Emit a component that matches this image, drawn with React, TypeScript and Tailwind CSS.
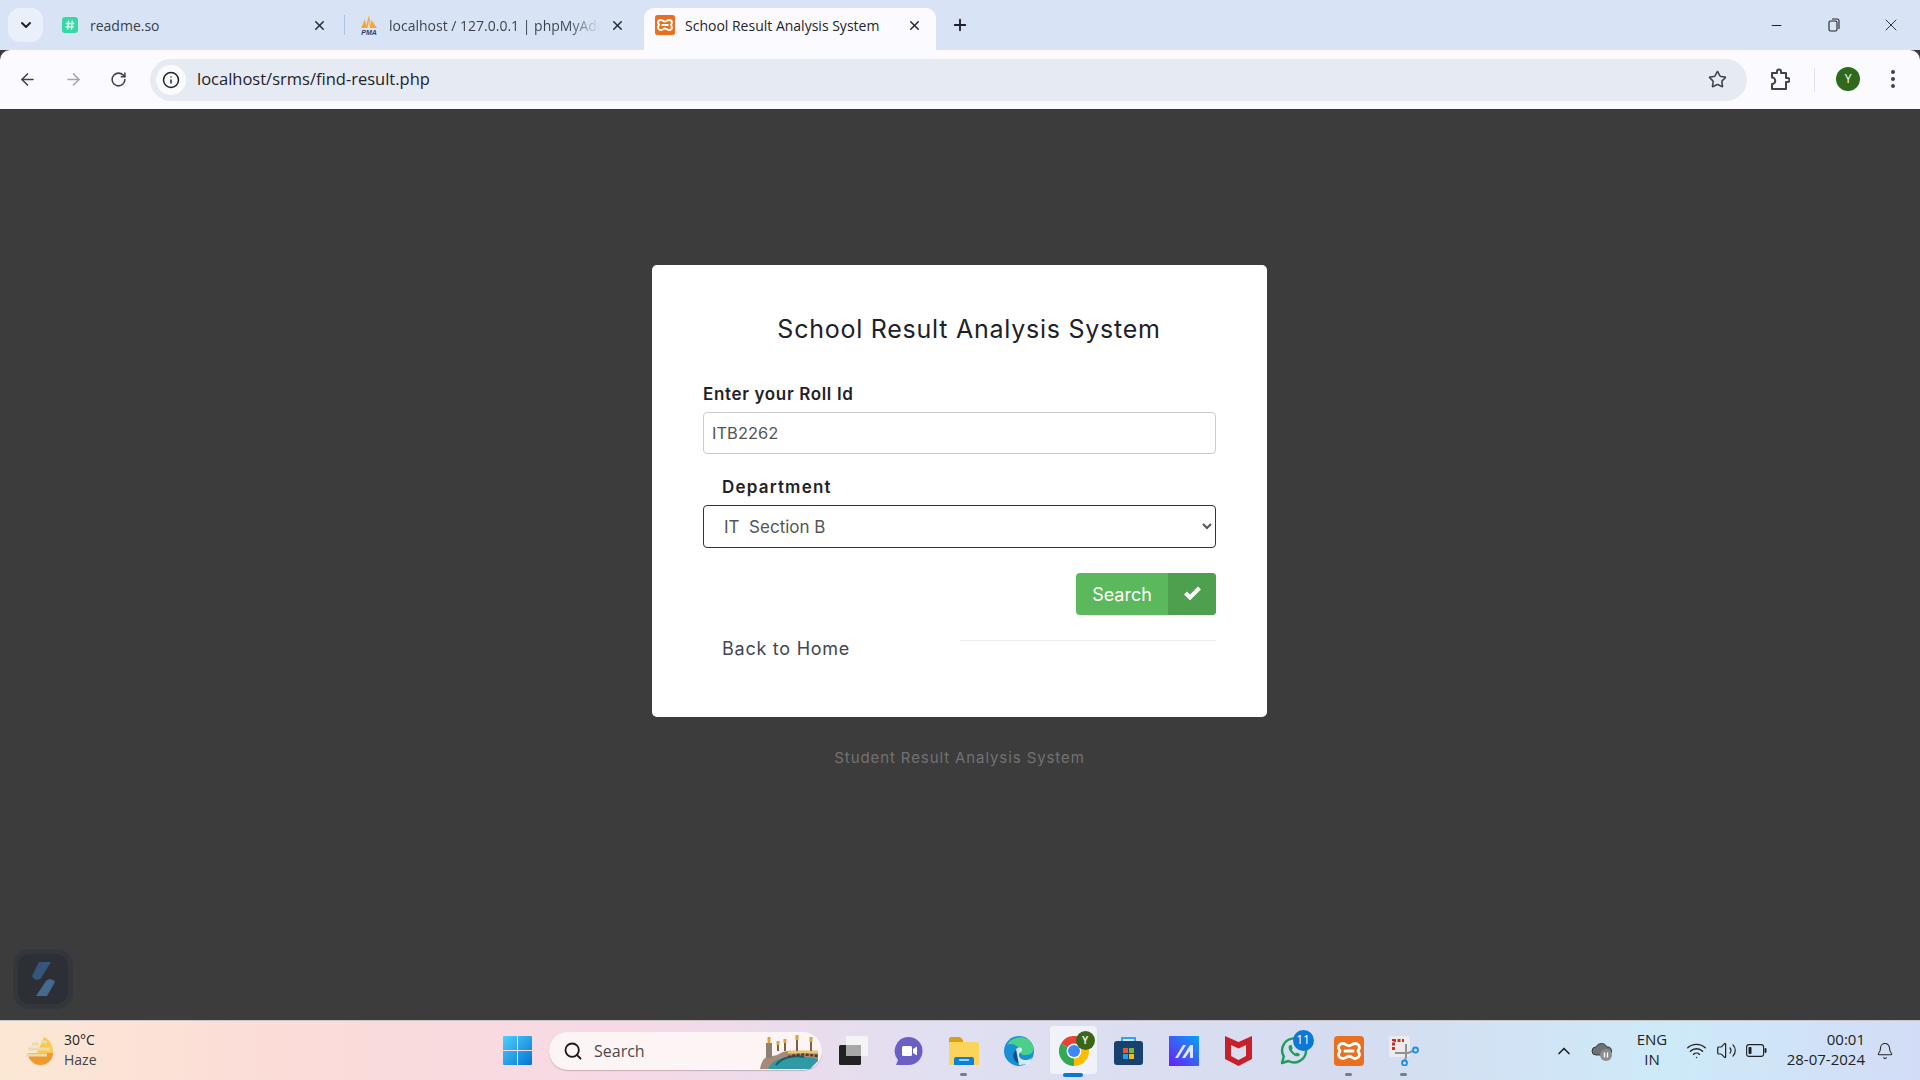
import { ArrowLeft, ArrowRight, RotateCw, Star, Info, X, Plus, ChevronDown, ChevronUp, Minus, Search, Wifi, Volume2, Bell } from 'lucide-react'

const FORM_FONT = 'font-["Inter","Open_Sans",sans-serif]'
const UI_FONT = 'font-["Open_Sans","Noto_Sans",sans-serif]'

// --- favicons ---
function ReadmeIcon() {
  return (
    <svg width="16" height="16" viewBox="0 0 16 16" className="shrink-0">
      <rect width="16" height="16" rx="3" fill="#37d7a6" />
      <path d="M6.500 3.500 5.800 12.500M10.200 3.500l-.7 9M3.800 6.500h8.500M3.500 9.800h8.500" stroke="#e8fff6" strokeWidth="1.300" />
    </svg>
  )
}

function PmaIcon() {
  return (
    <svg width="20" height="20" viewBox="0 0 20 20" className="shrink-0">
      <path d="M2 13 6 4l1.500 9zM6.500 13 10 0l2 13zM11 13l1.500-8 5.500 8z" fill="#f7a440" />
      <path d="M8.500 13 10 5l1 8z" fill="#fbd9a8" />
      <text x="10" y="19.500" textAnchor="middle" fontSize="7" fontWeight="800" fontStyle="italic" fontFamily="Liberation Sans" fill="#2c3f73">PMA</text>
    </svg>
  )
}

function XamppIcon({ size = 20 }: { size?: number }) {
  return (
    <svg width={size} height={size} viewBox="0 0 20 20" className="shrink-0">
      <rect width="20" height="20" rx="2.500" fill="#e8701f" />
      <path d="M6 5c1.500 0 2.500 1.500 4 1.500S12.500 5 14 5c2 0 3 1.500 3 2.800 0 1-1 1.600-1 2.200s1 1.200 1 2.200c0 1.300-1 2.800-3 2.800-1.500 0-2.500-1.500-4-1.500S7.500 15 6 15c-2 0-3-1.500-3-2.800 0-1 1-1.600 1-2.200s-1-1.200-1-2.200C3 6.500 4 5 6 5zM6.500 10h7" fill="none" stroke="#fff" strokeWidth="1.900" />
    </svg>
  )
}

// --- taskbar icons ---
function WeatherIcon() {
  return (
    <svg width="30" height="29" viewBox="0 0 30 29">
      <path d="M3 17a12.500 12 0 0 0 25 0z" fill="#f0982a" />
      <path d="M19 1c5 2 9 8 9 16H12z" fill="#fbc84a" />
      <path d="M7 8h7M16 6h6M3 13h22M1 19h21" stroke="#eadcb0" strokeWidth="3" />
    </svg>
  )
}

function WindowsIcon() {
  return (
    <svg width="29" height="29" viewBox="0 0 29 29">
      <defs>
        <linearGradient id="win" x1="0" y1="0" x2="1" y2="1">
          <stop offset="0" stopColor="#4fd0fb" />
          <stop offset="1" stopColor="#0573d2" />
        </linearGradient>
      </defs>
      <path d="M0 1a1 1 0 0 1 1-1h13v14H0zM15 0h13a1 1 0 0 1 1 1v13H15zM0 15h14v14H1a1 1 0 0 1-1-1zM15 15h14v13a1 1 0 0 1-1 1H15z" fill="url(#win)" />
    </svg>
  )
}

function BridgeIcon() {
  return (
    <svg width="62" height="36" viewBox="0 0 62 36">
      <path d="M2 36c2-12 8-13 12-13 6 0 10-5 16-5h30v8c-18 0-36 2-46 10z" fill="#a58a78" />
      <path d="M10 36c4-10 20-16 50-10v2L52 36z" fill="#2f9aa6" />
      <path d="M18 32c6-8 18-10 28-8" fill="none" stroke="#1d5f66" strokeWidth="2" />
      <path d="M30 19h30" stroke="#eac36b" strokeWidth="3" />
      <path d="M30 24c8-3 18-3 30-1" fill="none" stroke="#5b3a2a" strokeWidth="2.500" strokeDasharray="3 1.500" />
      <rect x="8" y="10" width="6" height="15" fill="#8f8172" />
      <path d="M11 10V4" stroke="#d9a63c" strokeWidth="3" />
      <path d="M20 18v-6M27 18v-8M39 18V5M53 18V7" stroke="#7a6248" strokeWidth="2" />
      <path d="M39 7V2M53 9V4M27 10V6M20 12V8" stroke="#d6a63c" strokeWidth="3" />
    </svg>
  )
}

function TaskViewIcon() {
  return (
    <svg width="29" height="29" viewBox="0 0 29 29">
      <rect y="9" width="22" height="20" rx="1.500" fill="#222" />
      <rect x="7" width="22" height="20" rx="1.500" fill="#f4f4f4" />
      <rect x="7" y="9" width="15" height="11" fill="#a8a8a8" />
    </svg>
  )
}

function MeetIcon() {
  return (
    <svg width="29" height="30" viewBox="0 0 29 30">
      <path d="M14.500 1a14 14 0 0 1 0 28H2l2-5A14 14 0 0 1 14.500 1z" fill="#6a60c4" />
      <rect x="8" y="10" width="10" height="10" rx="1.500" fill="#fff" />
      <path d="m19 13 4-2.500v9L19 17z" fill="#fff" />
    </svg>
  )
}

function ExplorerIcon() {
  return (
    <svg width="30" height="28" viewBox="0 0 30 28">
      <path d="M0 2a2 2 0 0 1 2-2h9l3 3v6H0z" fill="#dd9f10" />
      <path d="M0 5h28a2 2 0 0 1 2 2v21H0z" fill="#fbd55b" />
      <path d="M5 22a2 2 0 0 1 2-2h16a2 2 0 0 1 2 2v6H5z" fill="#0c7fd6" />
      <rect x="10" y="22" width="10" height="2" fill="#9ad2f5" />
    </svg>
  )
}

function EdgeIcon() {
  return (
    <svg width="30" height="30" viewBox="0 0 30 30">
      <circle cx="15" cy="15" r="15" fill="#1b8fd3" />
      <path d="M3 9C7 0 24-3 29 10c2 7-3 9-8 9-4 0-5-2-5-4 0-5-9-9-13-6z" fill="#4ad08b" />
      <path d="M16 13c-6 0-8 6-6 10 2 5 10 7 15 3-8 2-12-2-11-6 0-3 2-5 2-7z" fill="#0c4f96" />
      <path d="M12 13c3-2 6-2 6 1 0 2-3 2-3 5 0 3 3 5 7 5 3 0 5-1 6-3l-3 7-10 1z" fill="#eaf4fb" opacity="0.9" />
    </svg>
  )
}

function ChromeIcon() {
  return (
    <svg width="30" height="30" viewBox="0 0 30 30">
      <path d="M15 15 2 7.500A15 15 0 0 1 28 7.500z" fill="#ea4335" />
      <path d="M15 15 2 7.500A15 15 0 0 0 15 30z" fill="#34a853" />
      <path d="M15 15h0L28 7.500A15 15 0 0 1 15 30z" fill="#fbbc04" />
      <circle cx="15" cy="15" r="7.500" fill="#fff" />
      <circle cx="15" cy="15" r="6" fill="#4285f4" />
    </svg>
  )
}

function StoreIcon() {
  return (
    <svg width="29" height="29" viewBox="0 0 29 29">
      <path d="M8 6V2h13v4" fill="none" stroke="#2aa8e8" strokeWidth="2" />
      <rect y="5" width="29" height="24" rx="3" fill="#17416f" />
      <rect x="9" y="12" width="5" height="5" fill="#e8562a" />
      <rect x="15" y="12" width="5" height="5" fill="#7cb82f" />
      <rect x="9" y="18" width="5" height="5" fill="#1fa2e8" />
      <rect x="15" y="18" width="5" height="5" fill="#fcb714" />
    </svg>
  )
}

function BlueAppIcon() {
  return (
    <svg width="30" height="30" viewBox="0 0 30 30">
      <defs>
        <linearGradient id="blue" x1="1" y1="0" x2="0" y2="1">
          <stop offset="0" stopColor="#0aa2f5" />
          <stop offset="1" stopColor="#6a1dfa" />
        </linearGradient>
      </defs>
      <rect width="30" height="30" fill="url(#blue)" />
      <path d="M6 22 14 9h3L9 22zM13 22l8-13h3v13h-3v-7l-5 7z" fill="#dfe6ff" />
    </svg>
  )
}

function McafeeIcon() {
  return (
    <svg width="27" height="30" viewBox="0 0 27 30">
      <path d="M0 0 13.500 6 27 0v23l-13.500 7L0 23zM6 9v11l7.500 4 7.500-4V9l-7.500 3.500z" fill="#c8202b" fillRule="evenodd" />
    </svg>
  )
}

function WhatsAppIcon() {
  return (
    <svg width="30" height="30" viewBox="0 0 30 30">
      <path d="M3 27l1.800-6.500A12 12 0 1 1 9.500 25z" fill="none" stroke="#1e9e5a" strokeWidth="2.500" strokeLinejoin="round" />
      <path d="M11 9c-2 1-2 4 1 7.500s6 4.500 8 3.500l1-2-3-1.500-1.200 1c-2-.7-3.500-2.500-4-4l1-1.200L12.500 9z" fill="#1e9e5a" />
    </svg>
  )
}

function SnipIcon() {
  return (
    <svg width="30" height="30" viewBox="0 0 30 30">
      <rect width="21" height="21" rx="2" fill="#eceaea" />
      <path d="M4.500 14V4.500H15" fill="none" stroke="#d32f1f" strokeWidth="3" strokeDasharray="3 1.500" />
      <path d="M17 8v13l-1 4M6 17h13l5-2" fill="none" stroke="#8f9295" strokeWidth="2" />
      <circle cx="15.500" cy="27" r="2.500" fill="none" stroke="#1c8fe0" strokeWidth="1.800" />
      <circle cx="26.500" cy="14" r="2.500" fill="none" stroke="#1c8fe0" strokeWidth="1.800" />
    </svg>
  )
}

function CloudPausedIcon() {
  return (
    <svg width="22" height="22" viewBox="0 0 22 22">
      <path d="M5 15a4 4 0 0 1 0-8 6 6 0 0 1 11 0 4 4 0 0 1 1 8z" fill="#6e7176" stroke="#222" strokeWidth="0.800" />
      <circle cx="15" cy="15" r="6" fill="#8b8d90" />
      <path d="M13.500 12.500v5M16.500 12.500v5" stroke="#fff" strokeWidth="1.300" />
    </svg>
  )
}

function BatteryIcon() {
  return (
    <svg width="21" height="13" viewBox="0 0 21 13">
      <rect x="0.600" y="0.600" width="17" height="11.800" rx="2.500" fill="none" stroke="#222" strokeWidth="1.100" />
      <rect x="2.500" y="3" width="3" height="7" rx="0.800" fill="#222" />
      <rect x="18.500" y="4" width="2" height="5" rx="1" fill="#222" />
    </svg>
  )
}

function ExtensionIcon() {
  return (
    <svg width="20" height="24" viewBox="0 0 20 24" fill="none" stroke="#3d424b" strokeWidth="2" strokeLinejoin="round">
      <path d="M2 5h5V3.500a2 2 0 0 1 4 0V5h5v5h1.500a2 2 0 0 1 0 4H16v7H2v-5a3 3 0 0 0 0-6.500z" />
    </svg>
  )
}

function SidekickLogo() {
  return (
    <svg width="26" height="36" viewBox="0 0 26 36">
      <path d="M9 1h12L11 17c-2 3-8 2-9-2z" fill="#35567a" />
      <path d="M17 35H6l10-15c2-3 8-2 9 1z" fill="#466a8c" />
    </svg>
  )
}

function TabClose() {
  return <X className="w-[15px] h-[15px] text-[#2a2f36]" strokeWidth={2.5} />
}

function TaskbarItem({ children, active, running }: { children: React.ReactNode; active?: boolean; running?: boolean }) {
  return (
    <div className="relative w-[55px] h-[59px] flex items-center justify-center">
      {active && <div className="absolute left-[4px] top-[5px] w-[47px] h-[48px] rounded bg-white/60" />}
      <div className="relative">{children}</div>
      {active && <div className="absolute left-[17px] bottom-[3px] w-[20px] h-[4px] rounded-full bg-[#0b78d4]" />}
      {running && <div className="absolute left-[24px] bottom-[4px] w-[7px] h-[3px] rounded-full bg-[#7a7d84]" />}
    </div>
  )
}

export default function App() {
  return (
    <div className="h-screen flex flex-col overflow-hidden bg-[#3c3c3c]">
      {/* browser tab strip */}
      <div className={`h-[50px] shrink-0 flex items-end bg-[#d8e4f6] text-[14px] text-[#3a3f47] ${UI_FONT}`}>
        <div className="self-start ml-[8px] mt-[8px] w-[35px] h-[34px] rounded-xl bg-[#eaf0fa] flex items-center justify-center">
          <ChevronDown className="w-[16px] h-[16px] text-[#1f2329]" strokeWidth={3} />
        </div>
        <div className="w-[301px] h-[42px] flex items-center pb-[8px] pl-[19px] pr-[17px] gap-[12px]">
          <ReadmeIcon />
          <span className="flex-1">readme.so</span>
          <TabClose />
        </div>
        <div className="self-start mt-[15px] w-[1px] h-[20px] bg-[#a9c3ea]" />
        <div className="w-[299px] h-[42px] flex items-center pb-[8px] pl-[14px] pr-[19px] gap-[10px]">
          <PmaIcon />
          <span className="flex-1 overflow-hidden whitespace-nowrap text-transparent bg-clip-text bg-gradient-to-r from-[#3a3f47] from-85% to-transparent">localhost / 127.0.0.1 | phpMyAdmin</span>
          <TabClose />
        </div>
        <div className="w-[292px] h-[42px] rounded-t-[10px] bg-[#fbfbff] flex items-center pb-[8px] pl-[11px] pr-[14px] gap-[10px] text-[#1f2329]">
          <XamppIcon />
          <span className="flex-1 whitespace-nowrap">School Result Analysis System</span>
          <TabClose />
        </div>
        <div className="self-center ml-[15px]">
          <Plus className="w-[18px] h-[18px] text-[#1f2329]" strokeWidth={2.5} />
        </div>
        <div className="ml-auto self-start h-[50px] flex items-center text-[#222]">
          <div className="w-[57px] flex justify-center"><Minus className="w-[15px] h-[15px]" strokeWidth={1.6} /></div>
          <div className="w-[57px] flex justify-center">
            <svg width="14" height="14" viewBox="0 0 14 14" fill="none" stroke="#222" strokeWidth="1.100">
              <rect x="2" y="3" width="8" height="10" rx="1.500" />
              <path d="M5 1h5a2 2 0 0 1 2 2v8" />
            </svg>
          </div>
          <div className="w-[58px] flex justify-center"><X className="w-[20px] h-[20px]" strokeWidth={1.1} /></div>
        </div>
      </div>

      {/* browser toolbar */}
      <div className={`h-[60px] shrink-0 flex items-center rounded-t-[10px] bg-[#fbfbff] border-b border-[#33363a] text-[#3d424b] ${UI_FONT}`}>
        <div className="w-[150px] pl-[18px] flex items-center gap-[27px]">
          <ArrowLeft className="w-[19px] h-[19px]" strokeWidth={2} />
          <ArrowRight className="w-[19px] h-[19px] text-[#a3a7ad]" strokeWidth={2} />
          <RotateCw className="w-[17px] h-[17px]" strokeWidth={2.2} />
        </div>
        <div className="w-[1597px] h-[42px] rounded-full bg-[#e6ebf3] flex items-center pl-[6px] pr-[20px]">
          <div className="w-[30px] h-[30px] rounded-full bg-[#fbfbff] flex items-center justify-center">
            <Info className="w-[18px] h-[18px] text-[#1f2329]" strokeWidth={2} />
          </div>
          <span className="ml-[11px] flex-1 text-[16.500px] text-[#1f2329]">localhost/srms/find-result.php</span>
          <Star className="w-[19px] h-[19px] text-[#3d424b]" strokeWidth={2} />
        </div>
        <div className="ml-[23px]"><ExtensionIcon /></div>
        <div className="ml-[24px] w-[1px] h-[24px] bg-[#dde3ee]" />
        <div className="ml-[21px] mb-[2px] w-[24px] h-[24px] rounded-full bg-[#2f6a1c] text-white text-[12px] flex items-center justify-center">Y</div>
        <div className="ml-[31px] mb-[2px] flex flex-col gap-[3px]">
          <span className="w-[4px] h-[4px] rounded-full bg-[#3d424b]" />
          <span className="w-[4px] h-[4px] rounded-full bg-[#3d424b]" />
          <span className="w-[4px] h-[4px] rounded-full bg-[#3d424b]" />
        </div>
      </div>

      {/* page */}
      <main className={`relative flex-1 flex flex-col items-center pt-[155px] pr-[1px] ${FORM_FONT}`}>
        <div className="w-[615px] rounded-[5px] bg-white px-[51px] pt-[45px] pb-[57px]">
          <h1 className="h-[36px] pl-[19px] text-center text-[25px] leading-[38px] tracking-[0.75px] text-[#1d2129] font-normal">School Result Analysis System</h1>
          <label className="block mt-[37px] h-[22px] leading-[22px] text-[17px] font-semibold tracking-[0.65px] text-[#1f2329]">Enter your Roll Id</label>
          <input
            type="text"
            defaultValue="ITB2262"
            className="block mt-[7px] w-full h-[42px] rounded border border-[#cccccc] px-[8px] text-[16.500px] text-[#555555] outline-none"
          />
          <label className="block mt-[22px] pl-[19px] h-[22px] leading-[22px] text-[17px] font-semibold tracking-[1.2px] text-[#1f2329]">Department</label>
          <select
            defaultValue="itb"
            className="block mt-[7px] w-full h-[43px] rounded border border-[#333333] pt-[1px] px-[16px] text-[17px] text-[#555555] bg-white outline-none"
          >
            <option value="itb">IT&nbsp;&nbsp;Section B</option>
          </select>
          <div className="mt-[25px] flex justify-end">
            <button type="button" className="h-[42px] flex rounded overflow-hidden bg-[#5cb85c] text-white text-[18px]">
              <span className="w-[92px] h-full flex items-center justify-center">Search</span>
              <span className="w-[48px] h-full flex items-center justify-center bg-[#4e9f4e]">
                <svg width="17" height="14" viewBox="0 0 17 14" className="mb-[2px]" fill="none" stroke="#fff" strokeWidth="4">
                  <path d="M1.500 7l4.500 4.500L15.500 2" />
                </svg>
              </span>
            </button>
          </div>
          <div className="mt-[23px] grid grid-cols-2">
            <a className="pl-[19px] h-[22px] leading-[22px] text-[18px] tracking-[0.75px] text-[#3f4650]">Back to Home</a>
            <div className="mt-[2px] border-t border-[#eeeeee]" />
          </div>
        </div>
        <p className="mt-[30px] h-[22px] leading-[22px] text-[15px] tracking-[0.9px] text-[#727272]">Student Result Analysis System</p>

        {/* floating extension button */}
        <div className="absolute left-[13px] bottom-[11px] w-[60px] h-[60px] rounded-2xl bg-[#33363b] flex items-center justify-center">
          <div className="w-[50px] h-[50px] rounded-xl bg-[#2c2f35] flex items-center justify-center">
            <SidekickLogo />
          </div>
        </div>
      </main>

      {/* windows taskbar */}
      <div className={`h-[60px] shrink-0 flex items-center border-t border-[#c9c6c8] bg-[linear-gradient(90deg,#fbe8d4_0%,#fbdcd8_15%,#f6d9e6_33%,#dfe0f2_50%,#d6dcf0_70%,#cdeaf9_87%,#d3dcf6_100%)] text-[#222] ${UI_FONT}`}>
        <div className="w-[490px] pl-[25px] flex items-center gap-[9px]">
          <WeatherIcon />
          <div className="pb-[2px] text-[14px] leading-[20px]">
            <div>30°C</div>
            <div className="text-[#444]">Haze</div>
          </div>
        </div>
        <div className="w-[55px] flex justify-center"><WindowsIcon /></div>
        <div className="ml-[4px] w-[273px] h-[38px] rounded-full bg-[#fdf5f5] flex items-center pl-[14px] pr-[2px] shadow-[0_1px_1px_rgba(0,0,0,0.2)]">
          <Search className="w-[20px] h-[20px] text-[#1a1a1a]" strokeWidth={2.2} />
          <span className="ml-[11px] flex-1 text-[16px] text-[#4a4a4a]">Search</span>
          <BridgeIcon />
        </div>
        <div className="ml-[4px] flex items-center">
          <TaskbarItem><TaskViewIcon /></TaskbarItem>
          <TaskbarItem><MeetIcon /></TaskbarItem>
          <TaskbarItem running><ExplorerIcon /></TaskbarItem>
          <TaskbarItem><EdgeIcon /></TaskbarItem>
          <TaskbarItem active>
            <ChromeIcon />
            <div className="absolute -right-[6px] -top-[5px] w-[19px] h-[19px] rounded-full bg-[#3b6618] text-[#e4e8dc] text-[10px] font-bold flex items-center justify-center">Y</div>
          </TaskbarItem>
          <TaskbarItem><StoreIcon /></TaskbarItem>
          <TaskbarItem><BlueAppIcon /></TaskbarItem>
          <TaskbarItem><McafeeIcon /></TaskbarItem>
          <TaskbarItem>
            <WhatsAppIcon />
            <div className="absolute -right-[5px] -top-[6px] w-[21px] h-[21px] rounded-full bg-[#0b78d4] text-white text-[12px] flex items-center justify-center">11</div>
          </TaskbarItem>
          <TaskbarItem running><XamppIcon size={30} /></TaskbarItem>
          <TaskbarItem running><SnipIcon /></TaskbarItem>
        </div>

        {/* system tray */}
        <div className="ml-[123px] flex items-center text-[15px] leading-[20px]">
          <ChevronUp className="w-[20px] h-[20px]" strokeWidth={2} />
          <div className="ml-[17px]"><CloudPausedIcon /></div>
          <div className="ml-[12px] pb-[3px] w-[54px] text-center text-[#222]">
            <div>ENG</div>
            <div>IN</div>
          </div>
          <div className="ml-[7px]"><Wifi className="w-[21px] h-[21px]" strokeWidth={1.6} /></div>
          <div className="ml-[9px]"><Volume2 className="w-[21px] h-[21px]" strokeWidth={1.4} /></div>
          <div className="ml-[9px]"><BatteryIcon /></div>
          <div className="ml-[10px] pb-[3px] w-[88px] text-right">
            <div>00:01</div>
            <div>28-07-2024</div>
          </div>
          <div className="ml-[11px]"><Bell className="w-[18px] h-[18px]" strokeWidth={1.4} /></div>
        </div>
      </div>
    </div>
  )
}
